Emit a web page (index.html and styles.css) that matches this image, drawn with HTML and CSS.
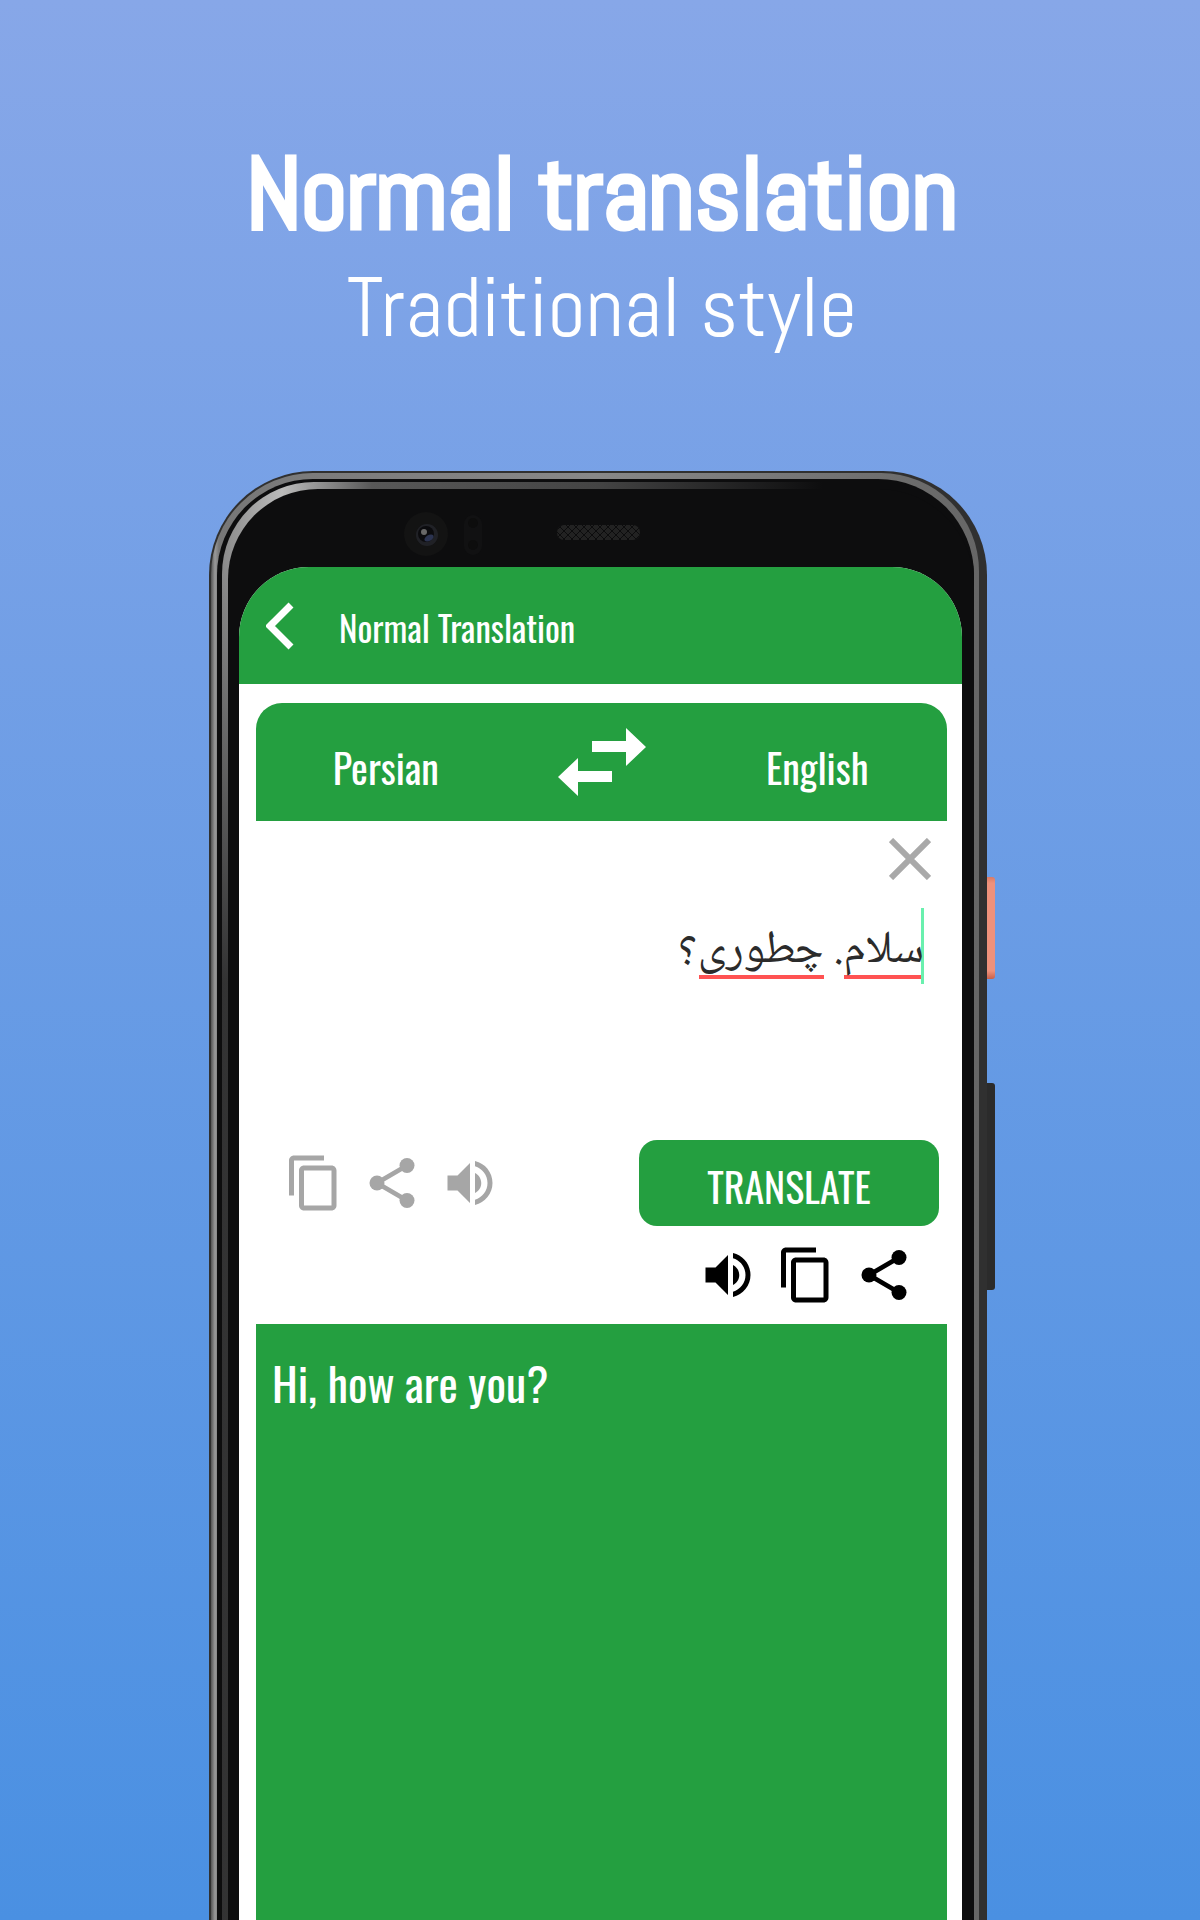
FILE: index.html
```html
<!DOCTYPE html>
<html lang="en">
<head>
<meta charset="utf-8">
<meta name="viewport" content="width=device-width, initial-scale=1">
<title>Normal translation</title>
<link rel="stylesheet" href="styles.css">
</head>
<body>
<svg class="sprite" aria-hidden="true">
  <symbol id="copy" viewBox="0 0 24 24"><path d="M16 1H4c-1.100 0-2 .9-2 2v14h2V3h12V1zm3 4H8c-1.100 0-2 .9-2 2v14c0 1.100.9 2 2 2h11c1.100 0 2-.9 2-2V7c0-1.100-.9-2-2-2zm0 16H8V7h11v14z"/></symbol>
  <symbol id="share" viewBox="0 0 24 24"><path d="M18 5 6 12l12 7" fill="none" stroke="currentColor" stroke-width="1.900"/><circle cx="18" cy="5" r="3"/><circle cx="6" cy="12" r="3"/><circle cx="18" cy="19" r="3"/></symbol>
  <symbol id="sound" viewBox="0 0 24 24"><path d="M3 9v6h4l5 5V4L7 9H3zm13.500 3c0-1.770-1.020-3.290-2.500-4.030v8.050c1.480-.73 2.500-2.250 2.500-4.020zM14 3.230v2.060c2.890.86 5 3.540 5 6.710s-2.110 5.850-5 6.710v2.060c4.010-.91 7-4.490 7-8.770s-2.990-7.860-7-8.770z"/></symbol>
</svg>
<main class="page">
  <header class="intro">
    <h1 class="intro-title">Normal translation</h1>
    <p class="intro-sub">Traditional style</p>
  </header>
  <div class="phone">
    <span class="side-key power"></span>
    <span class="side-key volume"></span>
    <div class="rim"><div class="gap"><div class="shine"><div class="glass">
      <svg class="sensors" viewBox="0 0 476 46" aria-hidden="true">
        <defs>
          <pattern id="mesh" width="8" height="8" patternUnits="userSpaceOnUse"><path d="M0 0l8 8M8 0L0 8" stroke="#0c0c0d" stroke-width="1"/></pattern>
        </defs>
        <circle cx="66" cy="23" r="22" fill="#131313"/>
        <circle cx="67" cy="24" r="11" fill="#202126"/>
        <circle cx="66" cy="23" r="8" fill="#0b0b0e"/>
        <ellipse cx="69" cy="27" rx="5" ry="3" fill="#2b3350" transform="rotate(-30 69 27)"/>
        <circle cx="64" cy="21" r="3" fill="#686868"/>
        <rect x="104" y="4" width="18" height="40" rx="9" fill="#111112"/>
        <circle cx="113" cy="12" r="5" fill="#0d0d0d"/><circle cx="113" cy="34" r="5" fill="#0d0d0d"/>
        <rect x="197" y="14" width="83" height="15" rx="7" fill="#222"/>
        <rect x="197" y="14" width="83" height="15" rx="7" fill="url(#mesh)"/>
      </svg>
      <div class="screen">
        <header class="appbar">
          <button class="back" type="button" aria-label="Back"><svg viewBox="0 0 28 48"><path d="M25 3 4 24l21 21" fill="none" stroke="currentColor" stroke-width="7"/></svg></button>
          <h2 class="appbar-title">Normal Translation</h2>
        </header>
        <div class="content">
          <div class="langs">
            <button class="lang" type="button">Persian</button>
            <button class="swap" type="button" aria-label="Swap languages"><svg viewBox="0 0 88 70"><path d="M34 14h34V1l20 19-20 19V25H34zM54 44H20V31L0 50l20 19V55h34z"/></svg></button>
            <button class="lang" type="button">English</button>
          </div>
          <section class="source">
            <button class="clear" type="button" aria-label="Clear text"><svg viewBox="0 0 42 42"><path d="M2 2l38 38M40 2 2 40" fill="none" stroke="currentColor" stroke-width="6"/></svg></button>
            <textarea class="input" lang="fa" dir="rtl" rows="1" spellcheck="false" aria-label="Text to translate">سلام. چطوری؟</textarea>
            <div class="actions">
              <div class="icons muted">
                <button type="button" aria-label="Copy source"><svg><use href="#copy"/></svg></button>
                <button type="button" aria-label="Share source"><svg><use href="#share"/></svg></button>
                <button type="button" aria-label="Listen to source"><svg><use href="#sound"/></svg></button>
              </div>
              <button class="translate" type="button">TRANSLATE</button>
            </div>
          </section>
          <div class="icons result-icons">
            <button type="button" aria-label="Listen to translation"><svg><use href="#sound"/></svg></button>
            <button type="button" aria-label="Copy translation"><svg><use href="#copy"/></svg></button>
            <button type="button" aria-label="Share translation"><svg><use href="#share"/></svg></button>
          </div>
          <p class="result">Hi, how are you?</p>
        </div>
      </div>
    </div></div></div></div>
  </div>
</main>
</body>
</html>
```
FILE: styles.css
```css
:root {
  --green: #249f40;
  --narrow: "Oswald", "Roboto Condensed", "Roboto", "Liberation Sans", sans-serif;
  --display: "Abel", "Roboto Condensed", "Roboto", "Liberation Sans", sans-serif;
}
* { box-sizing: border-box; }
body { margin: 0; font-family: var(--narrow); }
h1, h2, p { margin: 0; font-weight: 400; }
button { margin: 0; padding: 0; border: 0; background: none; color: inherit; font: inherit; cursor: pointer; }
svg { display: block; fill: currentColor; }
.sprite { position: absolute; width: 0; height: 0; }

.page {
  min-height: 100vh;
  display: flex;
  flex-direction: column;
  align-items: center;
  padding-right: 4px;
  background: linear-gradient(#87a7e8, #4a90e2);
}
.intro { padding: 134px 0 109px 8px; color: #fff; font-family: var(--display); text-align: center; }
.intro-title { font-size: 101px; line-height: 120px; font-weight: 700; -webkit-text-stroke: 2px #fff; }
.intro-sub { font-size: 84px; line-height: 108px; }

.phone {
  position: relative;
  flex: 1;
  width: 100%;
  max-width: 778px;
  display: flex;
  padding: 2px 8px 0 2px;
  border-radius: 104px 104px 0 0;
  background: #303030;
}
.side-key { position: absolute; left: 100%; width: 8px; border-radius: 0 3px 3px 0; }
.power { top: 406px; height: 102px; background: linear-gradient(#d97a64, #ee917b 6%, #ee917b 92%, #c9604a); }
.volume { top: 612px; height: 207px; background: #2b2b2b; }

.rim, .gap, .shine, .glass { flex: 1; display: flex; min-width: 0; }
.rim { padding: 6px 5px 0 6px; border-radius: 102px 98px 0 0; background: linear-gradient(90deg, #555, #999 4px, #777 8px, #888 50%, #666); }
.gap { padding: 3px 0 0 5px; border-radius: 96px 96px 0 0; background: #0d0d0e; }
.shine {
  padding: 7px 0 0 6px;
  border-radius: 92px 96px 0 0;
  background:
    linear-gradient(transparent 80px, rgba(13, 13, 14, .7) 500px),
    linear-gradient(90deg, #8a8a8a, #bbb 60px, #585858 150px, #444 50%, #0d0d0e 80%);
}
.glass { flex-direction: column; padding: 22px 12px 0 11px; border-radius: 90px 96px 0 0; background: #0d0d0e; }
.sensors { width: 476px; height: 46px; max-width: 100%; align-self: center; margin: 0 5px 10px 0; }

.screen { flex: 1; display: flex; flex-direction: column; overflow: hidden; border-radius: 70px 70px 0 0; background: #fff; }
.appbar { display: flex; align-items: center; gap: 45px; height: 117px; padding: 0 27px; background: var(--green); color: #fff; }
.back svg { width: 28px; height: 48px; }
.appbar-title { padding-top: 2px; font-size: 35px; line-height: 44px; }

.content { flex: 1; display: flex; flex-direction: column; padding: 19px 15px 0 17px; }
.langs { display: grid; grid-template-columns: 1fr 88px 1fr; gap: 42px; align-items: center; height: 118px; border-radius: 26px 26px 0 0; background: var(--green); color: #fff; }
.lang { padding-top: 10px; font-size: 40px; line-height: 48px; }
.swap svg { width: 88px; height: 70px; }

.source { display: flex; flex-direction: column; padding: 17px 8px 0; }
.clear { align-self: flex-end; margin-right: 8px; color: #a9a9a9; }
.clear svg { width: 42px; height: 42px; }
.input {
  height: 232px;
  margin: 28px 15px 0 20px;
  padding: 16px 0 0;
  border: 0;
  outline: 0;
  resize: none;
  overflow: hidden;
  color: #2b2b2b;
  font-family: "Noto Naskh Arabic UI", "Noto Naskh Arabic", "DejaVu Sans", sans-serif;
  font-size: 46px;
  line-height: 52px;
  background:
    linear-gradient(#69f0ae, #69f0ae) right 0 top 0 / 3px 76px no-repeat,
    linear-gradient(#ff5252, #ff5252) right 0 top 67px / 80px 4px no-repeat,
    linear-gradient(#ff5252, #ff5252) right 100px top 67px / 125px 4px no-repeat;
}
.actions { display: flex; justify-content: space-between; align-items: flex-start; padding-left: 20px; }
.icons { display: flex; gap: 18px; }
.icons svg { width: 60px; height: 60px; }
.muted { padding-top: 13px; color: #a6a6a6; }
.translate { width: 300px; height: 86px; padding-top: 6px; border-radius: 18px; background: var(--green); color: #fff; font-size: 40px; line-height: 48px; }
.result-icons { justify-content: flex-end; padding: 19px 33px 19px 0; color: #000; }
.result { flex: 1; padding: 32px 16px; background: var(--green); color: #fff; font-size: 46px; line-height: 52px; }
```
